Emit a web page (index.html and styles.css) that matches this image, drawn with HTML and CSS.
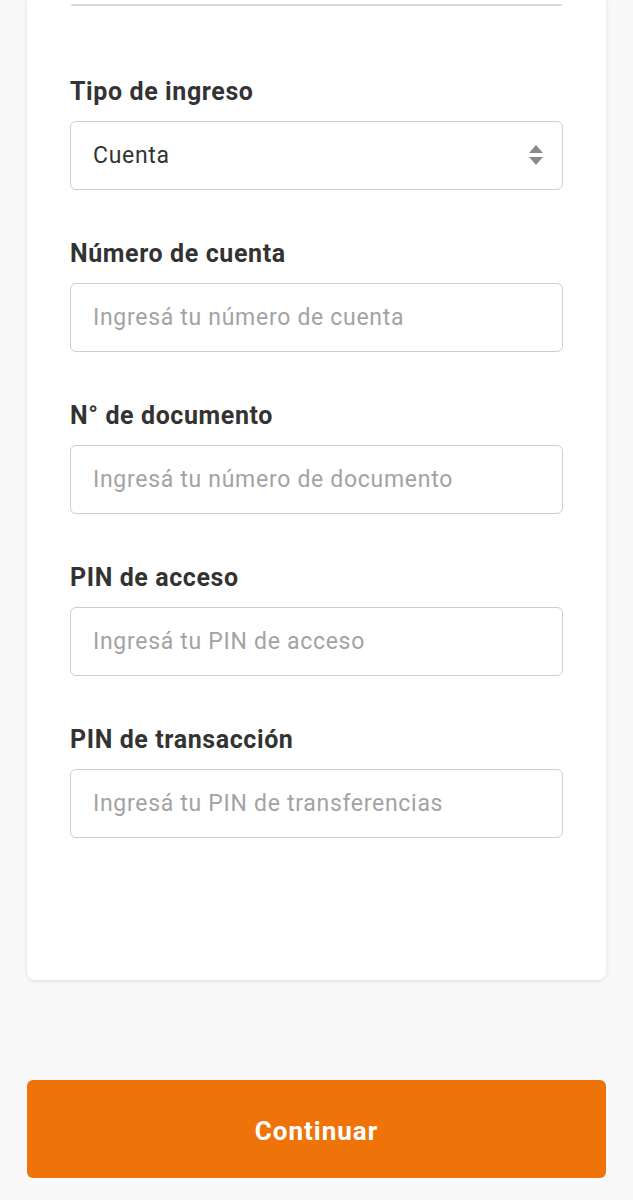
FILE: index.html
```html
<!DOCTYPE html>
<html lang="es">
<head>
    <meta charset="UTF-8">
    <meta name="viewport" content="width=device-width, initial-scale=1.0">
    <title>Ingreso</title>
    <link rel="stylesheet" href="styles.css">
</head>
<body>
    <div class="page">
        <div class="form-card">
            <div class="divider"></div>
            <form class="login-form">
                <div class="form-group">
                    <label for="tipo">Tipo de ingreso</label>
                    <div class="select-wrap">
                        <select id="tipo" name="tipo">
                            <option>Cuenta</option>
                        </select>
                        <svg class="select-arrows" width="16" height="24" viewBox="0 0 16 24">
                            <path d="M8 2 L15 10 L1 10 Z" fill="#8a8a8a"/>
                            <path d="M1 14 L15 14 L8 22 Z" fill="#8a8a8a"/>
                        </svg>
                    </div>
                </div>
                <div class="form-group">
                    <label for="cuenta">Número de cuenta</label>
                    <input type="text" id="cuenta" name="cuenta" placeholder="Ingresá tu número de cuenta">
                </div>
                <div class="form-group">
                    <label for="documento">N° de documento</label>
                    <input type="text" id="documento" name="documento" placeholder="Ingresá tu número de documento">
                </div>
                <div class="form-group">
                    <label for="pin">PIN de acceso</label>
                    <input type="password" id="pin" name="pin" placeholder="Ingresá tu PIN de acceso">
                </div>
                <div class="form-group">
                    <label for="pintx">PIN de transacción</label>
                    <input type="password" id="pintx" name="pintx" placeholder="Ingresá tu PIN de transferencias">
                </div>
            </form>
        </div>
        <button type="button" class="continue">Continuar</button>
    </div>
</body>
</html>
```

FILE: styles.css
```css
body {
    font-family: Roboto, "Noto Sans", Arial, sans-serif;
    background-color: #f9f9f9;
    margin: 0;
}
.page {
    padding: 0 27px;
}
.form-card {
    background-color: #ffffff;
    border-radius: 0 0 8px 8px;
    box-shadow: 0 1px 4px rgba(0, 0, 0, 0.12);
    padding: 4px 43px 142px 43px;
    width: 579px;
    box-sizing: border-box;
}
.divider {
    height: 2px;
    background-color: #dadada;
    border-radius: 1px;
    margin: 0 1px 70px 1px;
}
.form-group {
    margin-bottom: 48px;
}
.form-group:last-child {
    margin-bottom: 0;
}
.form-group label {
    display: block;
    font-size: 25px;
    line-height: 31px;
    font-weight: bold;
    letter-spacing: 0.6px;
    color: #333333;
    margin-bottom: 14px;
}
.form-group input,
.form-group select {
    display: block;
    width: 100%;
    height: 69px;
    box-sizing: border-box;
    padding: 0 22px;
    border: 1.5px solid #cfcfcf;
    border-radius: 6px;
    background-color: #ffffff;
    font-family: inherit;
    font-size: 23px;
    letter-spacing: 0.7px;
    color: #333333;
    outline: none;
}
.form-group input::placeholder {
    color: #a3a3a3;
}
.form-group select {
    appearance: none;
    -webkit-appearance: none;
}
.select-wrap {
    position: relative;
}
.select-arrows {
    position: absolute;
    right: 19px;
    top: 22px;
}
.continue {
    display: block;
    width: 579px;
    height: 98px;
    margin-top: 100px;
    padding-top: 4px;
    background-color: #ee7309;
    color: #ffffff;
    border: none;
    border-radius: 6px;
    font-family: inherit;
    font-size: 26px;
    font-weight: bold;
    letter-spacing: 1px;
    cursor: pointer;
}
```
